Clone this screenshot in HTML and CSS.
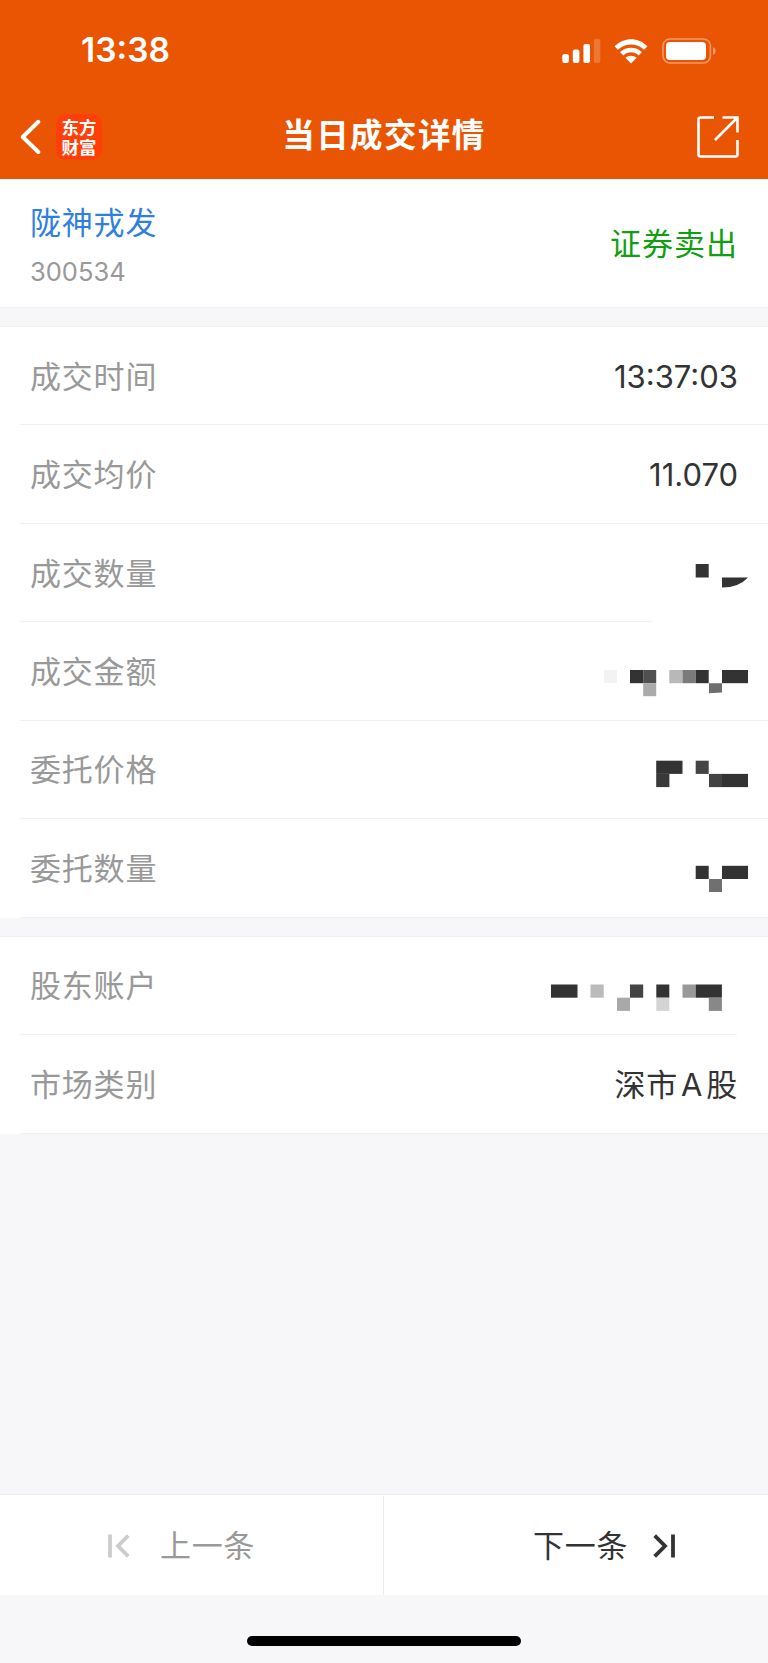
FILE: index.html
```html
<!DOCTYPE html>
<html lang="zh-CN">

<head>
    <meta charset="UTF-8">
    <meta name="viewport" content="width=device-width, initial-scale=1.0">
    <title>当日成交详情</title>
    <link rel="stylesheet" href="styles.css">
</head>

<body>
    <header class="header">
        <div class="status-bar">
            <span class="clock">13:38</span>
            <div class="status-icons">
                <svg class="signal" width="39" height="25" viewBox="0 0 39 25" fill="#fff">
                    <rect x="0.3" y="15" width="6.6" height="9" rx="2" />
                    <rect x="10.8" y="10.5" width="6.6" height="13.5" rx="2" />
                    <rect x="21.4" y="5" width="6.6" height="19" rx="2" />
                    <rect x="31.8" y="0" width="6.6" height="24" rx="2" opacity="0.2" />
                </svg>
                <svg class="wifi" width="34" height="25" viewBox="0 0 34 25" fill="#fff">
                    <path d="M.6 7.3C9.8-2.1 24.2-2.1 33.4 7.3L30.1 10.8C22.5 3.6 11.5 3.6 3.9 10.8Z" />
                    <path d="M6 13.1C12.2 7.3 21.8 7.3 28 13.1L24.7 16.4C20.2 12.3 13.8 12.3 9.3 16.4Z" />
                    <path d="M11.4 18.7C14.6 16 19.4 16 22.6 18.7L17 24.4Z" />
                </svg>
                <svg class="battery" width="55" height="26" viewBox="0 0 55 26">
                    <rect x="1" y="1" width="47.4" height="24" rx="7" fill="none" stroke="#fff" stroke-opacity="0.4" stroke-width="1.6" />
                    <rect x="4" y="4" width="40" height="18" rx="4" fill="#fff" />
                    <path d="M51 9v8c1.6-.7 2.6-2.2 2.6-4s-1-3.300-2.6-4z" fill="#fff" fill-opacity="0.4" />
                </svg>
            </div>
        </div>
        <div class="nav-bar">
            <div class="nav-left">
                <svg width="22" height="36" viewBox="0 0 22 36" fill="none" stroke="#fff" stroke-width="4" stroke-linecap="round" stroke-linejoin="round">
                    <path d="M18.3 2.8L2.8 18L18.3 33" />
                </svg>
                <div class="app-logo">
                    <span>东方</span>
                    <span>财富</span>
                </div>
            </div>
            <h1 class="title">当日成交详情</h1>
            <div class="nav-right">
                <svg width="42" height="42" viewBox="0 0 42 42" fill="none" stroke="#fff" stroke-width="2.6">
                    <path d="M17 1.5H3.5Q1.5 1.5 1.5 3.5V38.5Q1.5 40.5 3.5 40.5H38.5Q40.5 40.5 40.5 38.5V24" />
                    <path d="M25.5 1.5H40.5V16.5M40.5 1.5L18 24" />
                </svg>
            </div>
        </div>
    </header>

    <main class="content">
        <section class="stock">
            <div class="stock-info">
                <div class="stock-name">陇神戎发</div>
                <div class="stock-code">300534</div>
            </div>
            <div class="stock-action">证券卖出</div>
        </section>

        <section class="group">
            <div class="row">
                <span class="label">成交时间</span>
                <span class="value">13:37:03</span>
            </div>
            <div class="row">
                <span class="label">成交均价</span>
                <span class="value">11.070</span>
            </div>
            <div class="row row-cut">
                <span class="label">成交数量</span>
                <svg class="mask" viewBox="548 0 200 98" fill="#333">
                    <rect x="695.7" y="40" width="13" height="13.5" />
                    <path d="M722 53.5H748Q739 63.5 722 63.5Z" />
                </svg>
            </div>
            <div class="row">
                <span class="label">成交金额</span>
                <svg class="mask" viewBox="548 0 200 98" fill="#333">
                    <rect x="604" y="47" width="13" height="13" fill="#f3f3f3" />
                    <rect x="630" y="47" width="13.2" height="13.2" />
                    <rect x="643.2" y="47" width="13" height="13.2" fill="#505050" />
                    <rect x="643.2" y="60.2" width="13" height="13" fill="#aaa" />
                    <rect x="669.3" y="47" width="13.2" height="13.2" fill="#b8b8b8" />
                    <rect x="682.5" y="47" width="13.2" height="13.2" fill="#7b7b7b" />
                    <rect x="695.7" y="47" width="13" height="13.2" />
                    <path d="M709 60.2H722V69.6L709 70.2Z" fill="#6e6e6e" />
                    <rect x="722" y="47" width="26" height="13.2" />
                </svg>
            </div>
            <div class="row">
                <span class="label">委托价格</span>
                <svg class="mask" viewBox="548 0 200 98" fill="#333">
                    <rect x="656.2" y="39.7" width="26.3" height="13.2" />
                    <rect x="656.2" y="52.9" width="13.2" height="13.2" fill="#393939" />
                    <rect x="695.7" y="39.7" width="13" height="13.2" fill="#444" />
                    <rect x="709" y="52.9" width="13" height="13.2" fill="#424242" />
                    <rect x="722" y="52.9" width="26" height="13.2" />
                </svg>
            </div>
            <div class="row">
                <span class="label">委托数量</span>
                <svg class="mask" viewBox="548 0 200 98" fill="#333">
                    <rect x="695.7" y="46.8" width="13" height="13.2" />
                    <rect x="709" y="60" width="13" height="13" fill="#707070" />
                    <rect x="722" y="46.8" width="26" height="13.2" />
                </svg>
            </div>
        </section>

        <section class="group">
            <div class="row row-inset">
                <span class="label">股东账户</span>
                <svg class="mask" viewBox="548 0 200 98" fill="#333">
                    <rect x="551" y="47.5" width="26.5" height="13.2" />
                    <rect x="590.5" y="47.5" width="13.2" height="13.2" fill="#bbb" />
                    <rect x="617" y="60.7" width="13" height="13.2" fill="#a9a9a9" />
                    <rect x="630" y="47.5" width="13.2" height="13.2" fill="#444" />
                    <rect x="656.3" y="47.5" width="13" height="13.2" />
                    <rect x="656.3" y="60.7" width="13" height="13.2" fill="#d4d4d4" />
                    <rect x="682.5" y="47.5" width="13.2" height="13.2" fill="#999" />
                    <rect x="695.7" y="47.5" width="26.2" height="13.2" />
                    <rect x="708.8" y="60.7" width="13.1" height="13.2" fill="#888" />
                </svg>
            </div>
            <div class="row">
                <span class="label">市场类别</span>
                <span class="value value-cn">深市<span class="latin">A</span>股</span>
            </div>
        </section>
    </main>

    <footer class="pager">
        <div class="pager-item prev">
            <svg width="22" height="24" viewBox="0 0 22 24" fill="none" stroke="#ccc" stroke-width="3.8">
                <path d="M2 .5V23.5M20.3 1.7L10 12L20.3 22.3" />
            </svg>
            <span>上一条</span>
        </div>
        <div class="pager-item next">
            <span>下一条</span>
            <svg width="22" height="24" viewBox="0 0 22 24" fill="none" stroke="#333" stroke-width="3.8">
                <path d="M20 .5V23.5M1.7 1.7L12 12L1.7 22.3" />
            </svg>
        </div>
    </footer>
    <div class="home-area">
        <div class="home-indicator"></div>
    </div>
</body>

</html>
```

FILE: styles.css
```css
:root {
    --brand-color: #ea5504;
    --background-color: #f7f7fa;
    --line-color: #f1f1f2;
    --label-color: #999;
    --text-color: #333;
}

* {
    box-sizing: border-box;
}

body {
    margin: 0;
    height: 1663px;
    display: flex;
    flex-direction: column;
    font-family: Inter, 'Noto Sans CJK SC', sans-serif;
    font-size: 31px;
    line-height: 1;
    color: var(--text-color);
    background-color: var(--background-color);
}

svg {
    display: block;
    flex-shrink: 0;
}

.header {
    height: 179px;
    background-color: var(--brand-color);
    color: white;
}

.status-bar {
    height: 96px;
    padding: 6px 51px 0 81px;
    display: flex;
    justify-content: space-between;
    align-items: center;
}

.clock {
    font-size: 33.5px;
    font-weight: 600;
}

.status-icons {
    display: flex;
    align-items: center;
}

.wifi {
    margin-left: 13px;
}

.battery {
    margin-left: 14px;
}

.nav-bar {
    height: 83px;
    padding: 0 29px 2px 20px;
    display: grid;
    grid-template-columns: 1fr auto 1fr;
    align-items: center;
}

.nav-left {
    display: flex;
    align-items: center;
    gap: 14px;
}

.nav-right {
    display: flex;
    justify-content: flex-end;
}

.app-logo {
    width: 46px;
    height: 46px;
    border-radius: 9px;
    background-color: #ff3f08;
    font-family: 'Noto Sans CJK SC', sans-serif;
    font-size: 17.5px;
    font-weight: 700;
    line-height: 19.5px;
    display: flex;
    flex-direction: column;
    align-items: center;
    justify-content: center;
}

.title {
    margin: 0 0 0 9px;
    font-size: 32.5px;
    font-weight: 600;
    letter-spacing: 1.4px;
}

.content {
    flex: 1;
    padding-top: 1px;
    background: linear-gradient(white, white) 0 0 / 100% 1px no-repeat;
}

.stock {
    height: 128px;
    padding: 0 30px;
    background-color: white;
    border-bottom: 1px solid var(--line-color);
    display: flex;
    justify-content: space-between;
    align-items: center;
}

.stock-info {
    padding-top: 4px;
}

.stock-name {
    color: #2f7fe0;
    letter-spacing: 0.8px;
}

.stock-code {
    margin-top: 21px;
    font-size: 25.5px;
    color: var(--label-color);
}

.stock-action {
    color: #0f9f0f;
    letter-spacing: 1px;
}

.group {
    margin-top: 18px;
    background-color: white;
    border-top: 1px solid var(--line-color);
}

.row {
    height: 98.45px;
    padding: 0 30px;
    display: flex;
    justify-content: space-between;
    align-items: center;
    background: linear-gradient(var(--line-color), var(--line-color)) 20px 100% / 748px 1px no-repeat;
}

.row-cut {
    background-size: 632px 1px;
}

.row-inset {
    background-size: 717px 1px;
}

.label {
    color: var(--label-color);
    letter-spacing: 0.8px;
}

.value-cn {
    letter-spacing: 0.8px;
}

.latin {
    margin: 0 3px;
}

.mask {
    width: 200px;
    height: 98px;
    margin-right: -10px;
}

.pager {
    height: 101px;
    padding-top: 1px;
    display: grid;
    grid-template-columns: 1fr 1fr;
    background-color: white;
    border-top: 1px solid #ebecee;
    letter-spacing: 0.8px;
}

.pager-item {
    display: flex;
    align-items: center;
}

.prev {
    padding-left: 108px;
    gap: 30px;
    color: var(--label-color);
    border-right: 1px solid #ebecee;
}

.next {
    padding-left: 149px;
    gap: 25px;
}

.home-area {
    height: 68px;
    display: flex;
    justify-content: center;
    align-items: flex-end;
    padding-bottom: 17px;
}

.home-indicator {
    width: 274px;
    height: 10px;
    border-radius: 5px;
    background-color: black;
}
```
